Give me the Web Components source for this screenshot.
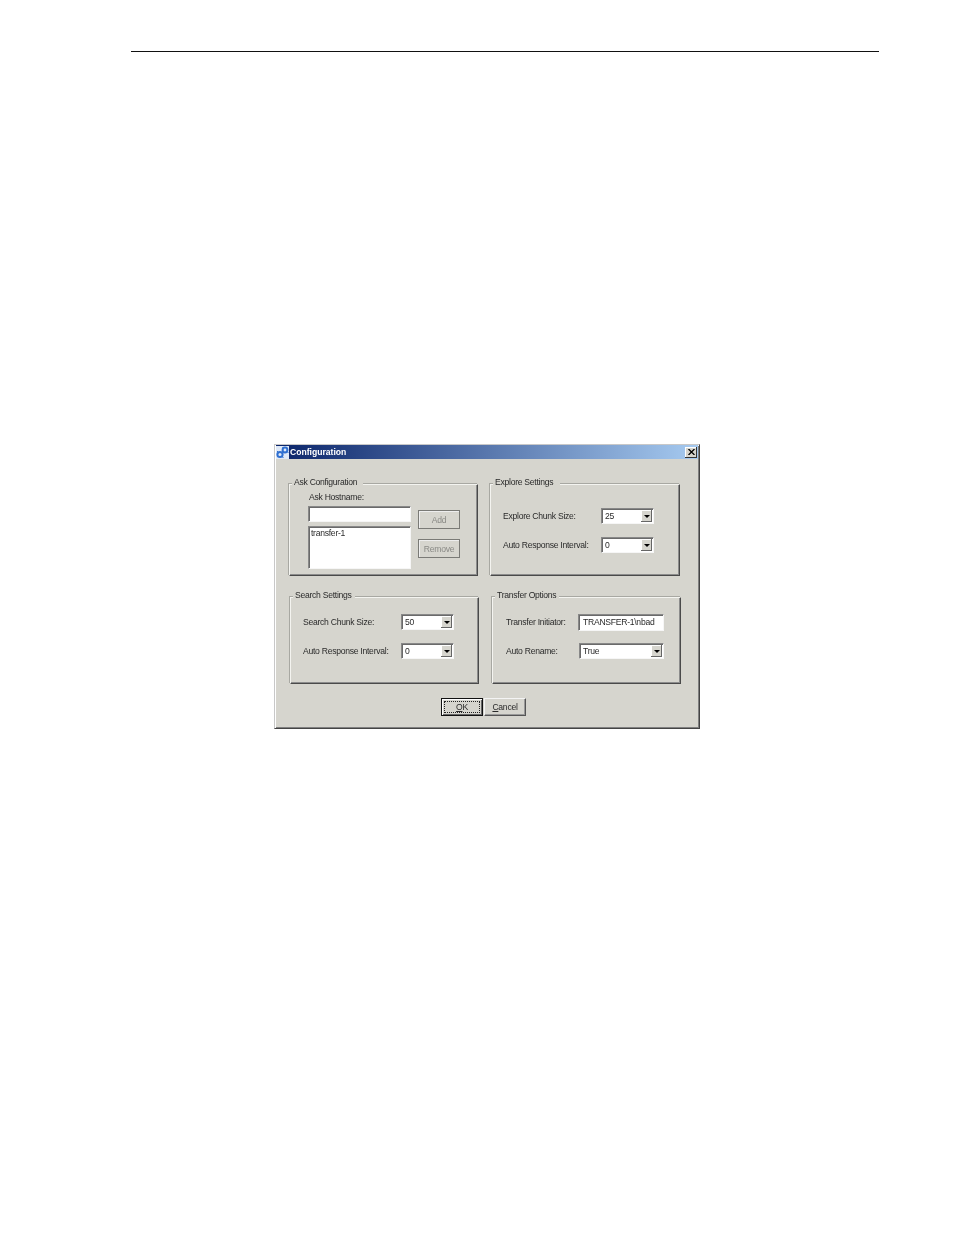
<!DOCTYPE html>
<html lang="en"><head><meta charset="utf-8"><title>Configuration</title>
<style>
html,body{margin:0;background:#fff}
body{width:954px;height:1235px;overflow:hidden;font:8.6px "Liberation Sans",sans-serif;letter-spacing:-.27px;color:#2a2a2a}
</style></head><body>
<doc-page>
<cfg-window title-text="Configuration">
  <cfg-row-set pad="14" gap="12" top="25" h="92">
    <cfg-group legend="Ask Configuration" w="189" legend-w="71">
      <ask-panel></ask-panel>
    </cfg-group>
    <cfg-group legend="Explore Settings" w="190" legend-w="67">
      <cfg-form pad-left="12" pad-top="23" label-w="98">
        <cfg-field label="Explore Chunk Size:"><cfg-select value="25" w="53"></cfg-select></cfg-field>
        <cfg-field label="Auto Response Interval:"><cfg-select value="0" w="53"></cfg-select></cfg-field>
      </cfg-form>
    </cfg-group>
  </cfg-row-set>
  <cfg-row-set pad="15" gap="13" top="21" h="87">
    <cfg-group legend="Search Settings" w="189" legend-w="62">
      <cfg-form pad-left="12" pad-top="16" label-w="98">
        <cfg-field label="Search Chunk Size:"><cfg-select value="50" w="53"></cfg-select></cfg-field>
        <cfg-field label="Auto Response Interval:"><cfg-select value="0" w="53"></cfg-select></cfg-field>
      </cfg-form>
    </cfg-group>
    <cfg-group legend="Transfer Options" w="189" legend-w="64">
      <cfg-form pad-left="13" pad-top="16" label-w="72">
        <cfg-field label="Transfer Initiator:"><cfg-input value="TRANSFER-1\nbad" w="86"></cfg-input></cfg-field>
        <cfg-field label="Auto Rename:"><cfg-select value="True" w="85" nudge="1"></cfg-select></cfg-field>
      </cfg-form>
    </cfg-group>
  </cfg-row-set>
  <cfg-actions>
    <cfg-button default><u>O</u>K</cfg-button>
    <cfg-button><u>C</u>ancel</cfg-button>
  </cfg-actions>
</cfg-window>
</doc-page>
<script>
const def=(n,html)=>{customElements.define(n,class extends HTMLElement{
  connectedCallback(){ if(this.shadowRoot) return; const s=this.attachShadow({mode:'open'});
    s.innerHTML=typeof html==='function'?html(this):html;} });};
const esc=v=>String(v).replace(/&/g,'&amp;').replace(/</g,'&lt;');
const FACE='#d6d5ce';
def('doc-page',`<style>
:host{display:block;height:1235px}
.rule{height:1px;background:#111;margin:51px 75px 0 131px}
.body{padding:392px 0 0 274px}
</style><div class="rule"></div><div class="body"><slot></slot></div>`);
def('cfg-window',h=>`<style>
:host{display:block;width:426px;height:285px;box-sizing:border-box;background:${FACE};filter:blur(.35px);
 border:1px solid;border-color:#c8c8c8 #444 #444 #c8c8c8;box-shadow:inset 1px 1px 0 #fff,inset -1px -1px 0 #808080}
.title{height:14px;margin:0 1px;display:flex;align-items:center;gap:1px;background:linear-gradient(90deg,#0a246a,#a6caf0);color:#fff;font:bold 8.6px/14px "Liberation Sans",sans-serif;letter-spacing:0}
svg{flex:none}
.t{flex:1}
.x{flex:none;width:12px;height:11px;margin-right:1px;background:${FACE};box-shadow:inset -1px -1px 0 #333,inset 1px 1px 0 #fff;display:flex;align-items:center;justify-content:center}
</style>
<div class="title">
<svg width="13" height="13" viewBox="0 0 13 13"><rect width="13" height="13" fill="#dfe9f7"/><circle cx="4" cy="8.5" r="2.6" fill="none" stroke="#2f6fd0" stroke-width="2"/><circle cx="9" cy="4" r="2.4" fill="none" stroke="#2f6fd0" stroke-width="2"/><path d="M6.5 1.5v1M11.5 6.5h1M1 5l1 1M6.5 11l1 1" stroke="#2f6fd0"/></svg>
<span class="t">${esc(h.getAttribute('title-text'))}</span>
<span class="x"><svg width="7" height="6" viewBox="0 0 7 6"><path d="M.5 0L6.5 6M6.5 0L.5 6" stroke="#000" stroke-width="1.3"/></svg></span>
</div><slot></slot>`);
def('cfg-row-set',h=>`<style>
:host{display:flex;box-sizing:border-box;gap:${h.getAttribute('gap')}px;padding-left:${h.getAttribute('pad')}px;margin-top:${h.getAttribute('top')}px;height:${h.getAttribute('h')}px}
</style><slot></slot>`);
def('cfg-group',h=>`<style>
:host{display:block;position:relative;box-sizing:border-box;width:${h.getAttribute('w')}px;height:100%;
 border:1px solid;border-color:#f4f4f0 #4a4a4a #4a4a4a #f4f4f0;box-shadow:inset -1px -1px 0 #8c8c8c,-1px -1px 0 #a8a8a2}
.l{position:absolute;left:2px;top:-8px;width:${h.getAttribute('legend-w')}px;height:11px;box-sizing:border-box;padding-left:2px;background:${FACE};line-height:11px;white-space:nowrap}
</style><div class="l">${esc(h.getAttribute('legend'))}</div><slot></slot>`);
def('cfg-form',h=>`<style>
:host{display:flex;flex-direction:column;gap:13px;padding:${h.getAttribute('pad-top')}px 0 0 ${h.getAttribute('pad-left')}px;--label-w:${h.getAttribute('label-w')}px}
</style><slot></slot>`);
def('cfg-field',h=>`<style>
:host{display:flex;align-items:center;height:16px}
.l{width:var(--label-w);flex:none;white-space:nowrap}
</style><span class="l">${esc(h.getAttribute('label'))}</span><slot></slot>`);
const sunken=`border:1px solid;border-color:#888 #f6f6f6 #f6f6f6 #888;box-shadow:inset 1px 1px 0 #6a6a6a;background:#fff;box-sizing:border-box`;
def('cfg-select',h=>`<style>
:host{display:flex;align-items:center;justify-content:space-between;width:${h.getAttribute('w')}px;height:16px;${sunken};padding:0 1px 0 3px;margin-left:${h.getAttribute('nudge')||0}px}
.b{width:11px;height:12px;background:${FACE};box-shadow:inset -1px -1px 0 #666,inset 1px 1px 0 #fff;display:flex;align-items:center;justify-content:center}
i{display:block;border:3px solid transparent;border-top:3px solid #000;border-bottom:0}
</style><span>${esc(h.getAttribute('value'))}</span><span class="b"><i></i></span>`);
def('cfg-input',h=>`<style>
:host{display:flex;align-items:center;width:${h.getAttribute('w')}px;height:17px;${sunken};padding:0 0 0 4px;white-space:nowrap;overflow:hidden}
</style>${esc(h.getAttribute('value')||'')}`);
def('ask-panel',`<style>
:host{display:grid;grid-template-columns:103px 42px;grid-template-rows:auto 16px 43px;column-gap:7px;padding:6px 0 0 18px}
.h{grid-column:1/3;height:15px;line-height:12px;padding-left:1px;white-space:nowrap}
.in{${sunken}}
.list{${sunken};margin-top:4px;height:43px;padding:1px 2px;line-height:11px;grid-column:1}
.btns{grid-column:2;grid-row:2/4;display:flex;flex-direction:column;gap:10px;padding-top:4px}
</style>
<div class="h">Ask Hostname:</div>
<div class="in"></div><div class="btns"><cfg-button disabled>Add</cfg-button><cfg-button disabled>Remove</cfg-button></div>
<div class="list">transfer-1</div>`);
def('cfg-actions',`<style>:host{display:flex;gap:1px;padding:14px 0 0 166px}</style><slot></slot>`);
def('cfg-button',h=>{const dis=h.hasAttribute('disabled'),d=h.hasAttribute('default');return `<style>
:host{display:flex;align-items:center;justify-content:center;position:relative;box-sizing:border-box;width:42px;height:${dis?'19px':'18px'};flex:none;background:${FACE};
 ${dis?'border:1px solid #7a7a76;box-shadow:inset 1px 1px 0 #eee;color:#8a8a86;':d?'border:1px solid #111;box-shadow:inset 1px 1px 0 #fff,inset -1px -1px 0 #666;':'border:1px solid;border-color:#f4f4f4 #555 #555 #f4f4f4;box-shadow:inset -1px -1px 0 #999;'}}
.f{position:absolute;inset:2px;border:1px dotted #222}
::slotted(u){text-decoration:underline}
</style>${d?'<span class="f"></span>':''}<slot></slot>`});
</script>
</body></html>
